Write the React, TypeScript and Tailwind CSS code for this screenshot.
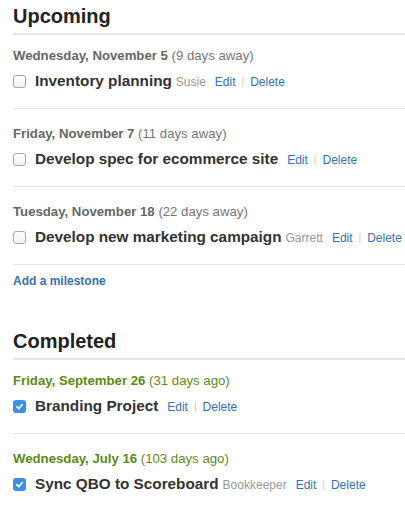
import React from 'react';

type Milestone = {
  date: string;
  rel: string;
  title: string;
  owner?: string;
};

const upcoming: Milestone[] = [
  { date: 'Wednesday, November 5', rel: '(9 days away)', title: 'Inventory planning', owner: 'Susie' },
  { date: 'Friday, November 7', rel: '(11 days away)', title: 'Develop spec for ecommerce site' },
  { date: 'Tuesday, November 18', rel: '(22 days away)', title: 'Develop new marketing campaign', owner: 'Garrett' },
];

const completed: Milestone[] = [
  { date: 'Friday, September 26', rel: '(31 days ago)', title: 'Branding Project' },
  { date: 'Wednesday, July 16', rel: '(103 days ago)', title: 'Sync QBO to Scoreboard', owner: 'Bookkeeper' },
];

const Box: React.FC<{ checked: boolean }> = ({ checked }) =>
  checked ? (
    <span className="flex h-[13px] w-[13px] shrink-0 items-center justify-center rounded-[3px] bg-[#3d8ee6]">
      <svg width="9" height="9" viewBox="0 0 10 10" fill="none">
        <path d="M2 5.2 L4.2 7.4 L8 2.8" stroke="white" strokeWidth="1.8" strokeLinecap="round" strokeLinejoin="round" />
      </svg>
    </span>
  ) : (
    <span className="h-[13px] w-[13px] shrink-0 rounded-[3px] border border-[#a9a9a9] bg-gradient-to-b from-white to-[#f1f1f1]" />
  );

const Row: React.FC<{ m: Milestone; first: boolean; done: boolean }> = ({ m, first, done }) => (
  <div className={`border-b border-[#e6e6e6] pb-4 ${first ? 'pt-[12px]' : 'pt-4'}`}>
    <div className={`h-[18px] text-[13.2px] leading-[18px] ${done ? 'text-[#5c8a17]' : 'text-[#666]'}`}>
      <span className="font-bold">{m.date}</span>{' '}
      <span className={done ? 'text-[#5f8c1c]' : 'text-[#777]'}>{m.rel}</span>
    </div>
    <div className="mt-[6px] flex h-[21px] items-center whitespace-nowrap">
      <Box checked={done} />
      <span className="ml-[9px] text-[15.3px] font-bold text-[#333]">{m.title}</span>
      {m.owner && <span className="ml-[4px] text-[12px] text-[#999]">{m.owner}</span>}
      <span className="ml-[9px] flex items-center text-[12px] text-[#3572b0]">
        <span>Edit</span>
        <span className="mx-[6px] text-[10px] text-[#ccc]">|</span>
        <span>Delete</span>
      </span>
    </div>
  </div>
);

const Section: React.FC<{ title: string; items: Milestone[]; done: boolean }> = ({ title, items, done }) => (
  <div>
    <h2 className="border-b-2 border-[#e6e6e6] pt-1 pb-[5px] text-[20px] font-bold leading-6 text-[#222]">{title}</h2>
    {items.map((m, i) => (
      <Row key={m.title} m={m} first={i === 0} done={done} />
    ))}
  </div>
);

const App: React.FC = () => {
  return (
    <div className="min-h-screen bg-white pl-[13px]" style={{ fontFamily: '"Liberation Sans", Arial, sans-serif' }}>
      <Section title="Upcoming" items={upcoming} done={false} />
      <div className="mt-2 text-[12px] font-bold leading-4 text-[#3572b0]">Add a milestone</div>
      <div className="mt-9">
        <Section title="Completed" items={completed} done={true} />
      </div>
    </div>
  );
};

export default App;
